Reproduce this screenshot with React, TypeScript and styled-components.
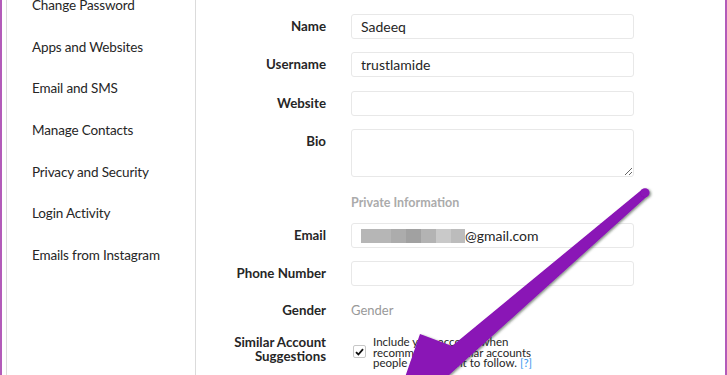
import styled, { createGlobalStyle } from "styled-components";

const GlobalStyle = createGlobalStyle`
  html, body {
    margin: 0;
    padding: 0;
    background: #fff;
    overflow: hidden;
  }
  body {
    font-family: "Lato", "Noto Sans", sans-serif;
    color: #262626;
  }
`;

const Frame = styled.div`
  position: relative;
  display: flex;
  width: 727px;
  height: 375px;
  box-sizing: border-box;
  border-left: 2px solid #b35bb9;
  border-right: 2px solid #b35bb9;
  padding-left: 4px;
  overflow: hidden;
`;

const Panel = styled.div`
  display: flex;
  flex: 1;
  border-left: 1px solid #dbdbdb;
`;

const Sidebar = styled.ul`
  width: 189px;
  box-sizing: border-box;
  border-right: 1px solid #dbdbdb;
  margin: 0;
  padding: 0;
  list-style: none;
`;

const SideList = styled.div`
  margin-top: -15px;
`;

const SideItem = styled.li`
  height: 41.7px;
  line-height: 41.7px;
  padding-left: 25px;
  font-size: 13.5px;
  letter-spacing: -0.15px;
  color: #262626;
  white-space: nowrap;
`;

const Main = styled.div`
  flex: 1;
  padding-top: 14px;
`;

const Row = styled.div<{ gap?: number }>`
  display: grid;
  grid-template-columns: 130px 283px;
  column-gap: 25px;
  align-items: start;
  margin-bottom: ${({ gap }) => (gap ?? 13)}px;
`;

const Label = styled.label<{ lh?: number }>`
  text-align: right;
  font-size: 13.3px;
  font-weight: 700;
  line-height: ${({ lh }) => lh ?? 25}px;
  color: #262626;
`;

const Field = styled.div<{ h?: number }>`
  box-sizing: border-box;
  height: ${({ h }) => h ?? 25}px;
  border: 1px solid #e8e8e8;
  border-radius: 3px;
  background: #fff;
  padding: 0 9px;
  display: flex;
  align-items: center;
  font-size: 14px;
  color: #262626;
`;

const Area = styled.textarea`
  box-sizing: border-box;
  height: 48px;
  width: 283px;
  border: 1px solid #e8e8e8;
  border-radius: 3px;
  background: #fff;
  margin: 0;
  padding: 4px 9px;
  font-family: inherit;
  font-size: 14px;
  display: block;
`;

const Section = styled.div`
  margin: 18px 0 12px 155px;
  font-size: 12.5px;
  font-weight: 700;
  line-height: 16px;
  color: #ababab;
`;

const Muted = styled.div`
  font-size: 13px;
  line-height: 25px;
  color: #999;
`;

const Blur = styled.span`
  display: inline-block;
  width: 104px;
  height: 14px;
  background: linear-gradient(
    to right,
    #b6b6b6 0 29%,
    #acacac 29% 43%,
    #a1a1a1 43% 58%,
    #b3b3b3 58% 72%,
    #c9c9c9 72% 87%,
    #bcbcbc 87% 100%
  );
`;

const Check = styled.div`
  display: flex;
  gap: 7px;
  padding-top: 2px;
`;

const Box = styled.span`
  flex: none;
  box-sizing: border-box;
  width: 13px;
  height: 13px;
  margin: 8px 0 0 2px;
  border: 1px solid #c7c7c7;
  border-radius: 2px;
  background: #fff;
  display: flex;
  align-items: center;
  justify-content: center;
`;

const CheckText = styled.div`
  font-size: 11.5px;
  line-height: 10.6px;
  color: #262626;
  width: 172px;
`;

const Help = styled.span`
  color: #3897f0;
  margin-left: 3px;
`;

const Arrow = styled.svg`
  position: absolute;
  top: 0;
  left: -2px;
  width: 727px;
  height: 375px;
  pointer-events: none;
`;

const menu = [
  "Change Password",
  "Apps and Websites",
  "Email and SMS",
  "Manage Contacts",
  "Privacy and Security",
  "Login Activity",
  "Emails from Instagram",
];

export default function App() {
  return (
    <>
      <GlobalStyle />
      <Frame>
        <Panel>
          <Sidebar>
            <SideList>
              {menu.map((m) => (
                <SideItem key={m}>{m}</SideItem>
              ))}
            </SideList>
          </Sidebar>
          <Main>
            <Row>
              <Label>Name</Label>
              <Field>Sadeeq</Field>
            </Row>
            <Row gap={14}>
              <Label>Username</Label>
              <Field>trustlamide</Field>
            </Row>
            <Row>
              <Label>Website</Label>
              <Field />
            </Row>
            <Row gap={0}>
              <Label>Bio</Label>
              <Area />
            </Row>
            <Section>Private Information</Section>
            <Row>
              <Label>Email</Label>
              <Field>
                <Blur />
                @gmail.com
              </Field>
            </Row>
            <Row gap={12}>
              <Label>Phone Number</Label>
              <Field />
            </Row>
            <Row gap={12}>
              <Label>Gender</Label>
              <Muted>Gender</Muted>
            </Row>
            <Row>
              <Label lh={14}>
                Similar Account
                <br />
                Suggestions
              </Label>
              <Check>
                <Box>
                  <svg width="9" height="8" viewBox="0 0 9 8">
                    <path d="M1 4.2 L3.4 6.5 L8 1.2" fill="none" stroke="#111" strokeWidth="1.8" />
                  </svg>
                </Box>
                <CheckText>
                  Include your account when recommending similar accounts people might want to
                  follow.<Help>[?]</Help>
                </CheckText>
              </Check>
            </Row>
          </Main>
        </Panel>
        <Arrow viewBox="0 0 727 375">
          <defs>
            <filter id="sh" x="-10%" y="-10%" width="120%" height="120%">
              <feDropShadow dx="1.5" dy="1" stdDeviation="0.8" floodColor="#2a3a2a" floodOpacity="0.55" />
            </filter>
          </defs>
          <g filter="url(#sh)" fill="#8a12b6">
            <path d="M642 189.5 L452 346 L420 334 L392 415 L480 400 L438 385 L647.5 196 Z" />
            <circle cx="645" cy="192.8" r="4.6" />
          </g>
        </Arrow>
      </Frame>
    </>
  );
}
